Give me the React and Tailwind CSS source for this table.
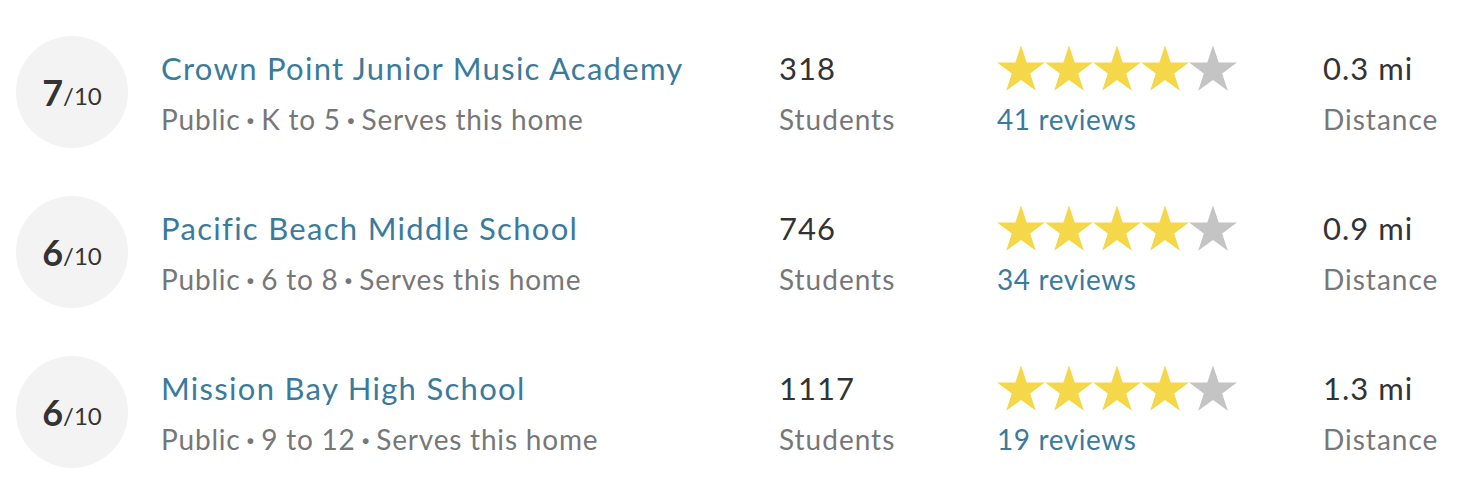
const SCHOOLS = [
  { score: 7, name: "Crown Point Junior Music Academy", grades: "K to 5", students: 318, reviews: 41, distance: "0.3 mi" },
  { score: 6, name: "Pacific Beach Middle School", grades: "6 to 8", students: 746, reviews: 34, distance: "0.9 mi" },
  { score: 6, name: "Mission Bay High School", grades: "9 to 12", students: 1117, reviews: 19, distance: "1.3 mi" },
];

function Star({ filled }) {
  return (
    <svg width="48" height="48" viewBox="0 0 24 24" className="shrink-0">
      <path
        d="M12 0.6L14.83 9.3L24 9.3L16.58 14.7L19.42 23.4L12 18L4.58 23.4L7.42 14.7L0 9.3L9.17 9.3Z"
        fill={filled ? "#f4d84a" : "#c4c4c4"}
      />
    </svg>
  );
}

function Dot() {
  return <span className="font-black mx-[6px]">·</span>;
}

export default function App() {
  return (
    <div className="bg-white w-[1484px] h-[500px] font-['Lato','Liberation_Sans',sans-serif] pt-9 pl-4 tracking-[1px]">
      {SCHOOLS.map((s) => (
        <div key={s.name} className="flex items-center h-[112px] mb-12">
          <div className="w-[112px] h-[112px] rounded-full bg-[#f3f3f3] flex items-center justify-center text-[#333] tracking-normal">
            <span className="text-[36px] font-bold">{s.score}</span>
            <span className="text-[24px] mt-2">/10</span>
          </div>
          <div className="ml-[33px] w-[618px]">
            <div className="text-[31px] text-[#3a7b9c] leading-[38px] tracking-[1.3px]">{s.name}</div>
            <div className="text-[28px] text-[#777] leading-[34px] mt-[15px] tracking-[0.8px]">
              Public<Dot />{s.grades}<Dot />Serves this home
            </div>
          </div>
          <div className="w-[218px]">
            <div className="text-[31px] text-[#333] leading-[38px]">{s.students}</div>
            <div className="text-[28px] text-[#777] leading-[34px] mt-[15px]">Students</div>
          </div>
          <div className="w-[326px]">
            <div className="flex h-[38px] items-center">
              {[0, 1, 2, 3, 4].map((i) => (
                <Star key={i} filled={i < 4} />
              ))}
            </div>
            <div className="text-[28px] text-[#3a7b9c] leading-[34px] mt-[15px] tracking-[0.6px]">{s.reviews} reviews</div>
          </div>
          <div>
            <div className="text-[31px] text-[#333] leading-[38px]">{s.distance}</div>
            <div className="text-[28px] text-[#777] leading-[34px] mt-[15px]">Distance</div>
          </div>
        </div>
      ))}
    </div>
  );
}
